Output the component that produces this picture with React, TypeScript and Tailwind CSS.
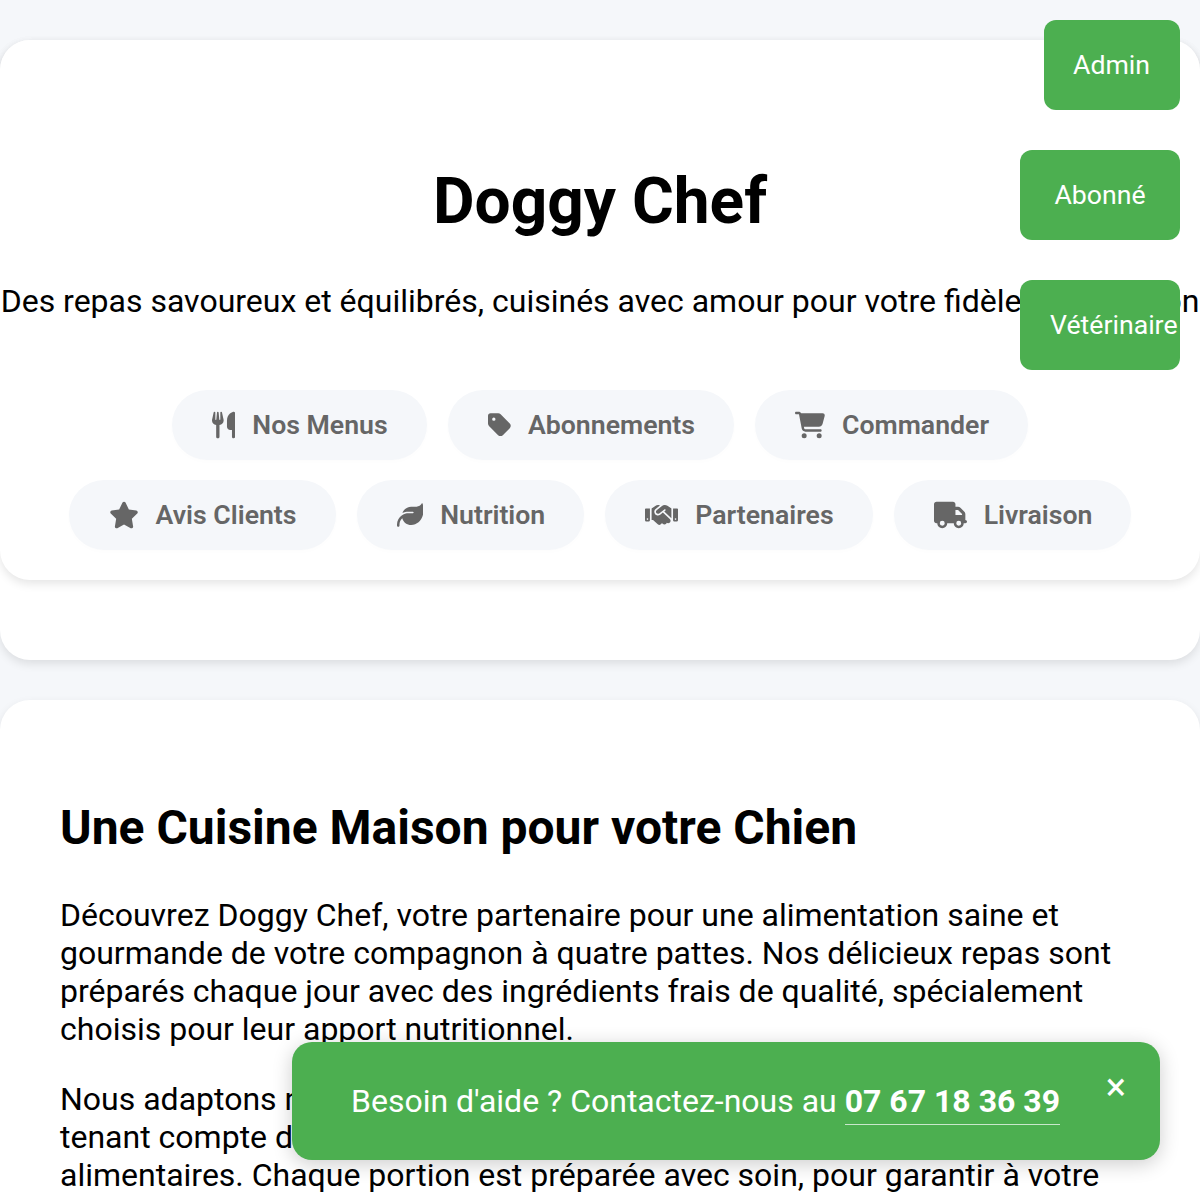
import { FaCartShopping, FaHandshake, FaLeaf, FaStar, FaTag, FaTruck, FaUtensils } from "react-icons/fa6"

const rowOne = [
  { icon: FaUtensils, size: "w-[23.3px]", label: "Nos Menus" },
  { icon: FaTag, size: "w-[23.3px]", label: "Abonnements" },
  { icon: FaCartShopping, size: "w-[30px]", label: "Commander" },
]

const rowTwo = [
  { icon: FaStar, size: "w-[30px]", label: "Avis Clients" },
  { icon: FaLeaf, size: "w-[26.67px]", label: "Nutrition" },
  { icon: FaHandshake, size: "w-[33px]", label: "Partenaires" },
  { icon: FaTruck, size: "w-[33px]", label: "Livraison" },
]

const NavPill = ({ icon: Icon, size, label }: { icon: typeof FaStar; size: string; label: string }) => (
  <a className="flex h-[70px] items-center gap-[17px] rounded-[35px] bg-[#f5f7fa] pr-[39px] pl-10 text-[26.67px] font-semibold text-[#666666] shadow-[0_2px_5px_rgba(0,0,0,0.01)]">
    <Icon className={`h-[30px] shrink-0 ${size}`} />
    <span>{label}</span>
  </a>
)

export default function App() {
  return (
    <div className="relative h-[1200px] overflow-hidden bg-[#f5f7fa] pt-10 font-['Roboto',sans-serif] text-black">
      {/* Header */}
      <div className="rounded-[30px] bg-white pb-20 shadow-[0_4px_10px_rgba(0,0,0,0.1)]">
        <header className="flex h-[540px] flex-col items-center rounded-[30px] bg-white shadow-[0_4px_10px_rgba(0,0,0,0.1)]">
          <h1 className="mt-[122px] text-[64px] leading-[80px] font-bold">Doggy Chef</h1>
          <p className="mt-[39px] text-[32px] leading-[40px] whitespace-nowrap">
            Des repas savoureux et équilibrés, cuisinés avec amour pour votre fidèle compagnon
          </p>
          <nav className="mt-[69px] flex flex-col items-center gap-5">
            <div className="flex gap-[21px]">
              {rowOne.map((p) => (
                <NavPill key={p.label} icon={p.icon} size={p.size} label={p.label} />
              ))}
            </div>
            <div className="flex gap-[21px]">
              {rowTwo.map((p) => (
                <NavPill key={p.label} icon={p.icon} size={p.size} label={p.label} />
              ))}
            </div>
          </nav>
        </header>
      </div>

      {/* Presentation */}
      <section className="mt-10 rounded-[30px] bg-white px-[60px] pt-[95px] pb-20 shadow-[0_4px_10px_rgba(0,0,0,0.1)]">
        <h2 className="text-[48px] leading-[66px] font-bold">Une Cuisine Maison pour votre Chien</h2>
        <p className="mt-[35px] text-[32px] leading-[38px]">
          Découvrez Doggy Chef, votre partenaire pour une alimentation saine et gourmande de votre compagnon à quatre pattes. Nos délicieux repas sont préparés chaque jour avec des ingrédients frais de qualité, spécialement choisis pour leur apport nutritionnel.
        </p>
        <p className="mt-8 text-[32px] leading-[38px]">
          Nous adaptons nos recettes aux besoins spécifiques de votre chien, en tenant compte de son âge, de son poids, de son activité et de ses besoins alimentaires. Chaque portion est préparée avec soin, pour garantir à votre ami à quatre pattes une alimentation équilibrée.
        </p>
      </section>

      {/* Acces */}
      <a className="absolute top-5 right-5 flex h-[90px] w-[136px] items-center rounded-xl bg-[#4caf50] px-[29px] text-[26.67px] text-white">Admin</a>
      <a className="absolute top-[150px] right-5 flex h-[90px] w-40 items-center justify-center rounded-xl bg-[#4caf50] text-[26.67px] text-white">Abonné</a>
      <a className="absolute top-[280px] right-5 flex h-[90px] w-40 items-center rounded-xl bg-[#4caf50] px-[30px] text-[26.67px] whitespace-nowrap text-white">Vétérinaire</a>

      {/* Contact */}
      <div className="absolute top-[1042px] left-[292px] flex h-[118px] w-[868px] items-center rounded-[20px] bg-[#4caf50] pl-[59px] text-[32px] text-white shadow-[0_4px_20px_rgba(0,0,0,0.2)]">
        <span className="whitespace-nowrap">
          Besoin d'aide ? Contactez-nous au{" "}
          <a className="border-b border-white/70 pb-1 font-bold">07 67 18 36 39</a>
        </span>
        <button className="absolute top-[23px] right-[34px] text-[38px] leading-[44px] text-white">×</button>
      </div>
    </div>
  )
}
